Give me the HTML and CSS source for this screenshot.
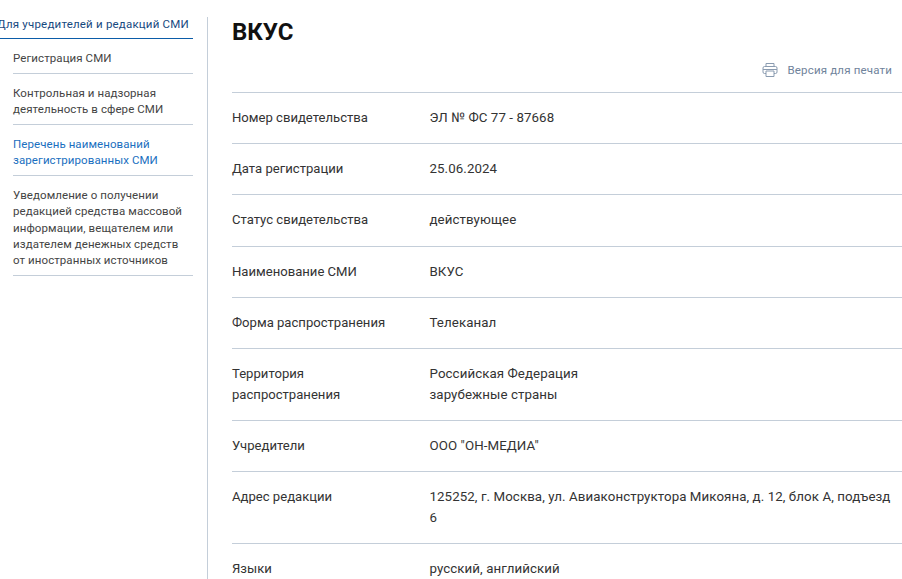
FILE: index.html
```html
<!DOCTYPE html>
<html lang="ru">
<head>
<meta charset="utf-8">
<title>ВКУС</title>
<link rel="stylesheet" href="styles.css">
</head>
<body>
<div class="page">
  <aside class="side">
    <a class="side-head">Для учредителей и редакций СМИ</a>
    <ul class="side-list">
      <li class="side-item">Регистрация СМИ</li>
      <li class="side-item">Контрольная и надзорная<br>деятельность в сфере СМИ</li>
      <li class="side-item side-active">Перечень наименований<br>зарегистрированных СМИ</li>
      <li class="side-item">Уведомление о получении<br>редакцией средства массовой<br>информации, вещателем или<br>издателем денежных средств<br>от иностранных источников</li>
    </ul>
  </aside>
  <main class="main">
    <h1 class="title">ВКУС</h1>
    <div class="print">
      <svg class="print-icon" width="16" height="16" viewBox="0 0 16 16" fill="none" stroke="#8a9bb0" stroke-width="1">
        <path d="M4 4.5V1.5H12V4.5"/>
        <path d="M4 11.5H2.5A1.5 1.5 0 0 1 1 10V6A1.5 1.5 0 0 1 2.5 4.5H13.5A1.5 1.5 0 0 1 15 6V10A1.5 1.5 0 0 1 13.5 11.5H12"/>
        <path d="M4 9H12V14.5H4Z"/>
        <path d="M1 7.5H15"/>
      </svg>
      <span>Версия для печати</span>
    </div>
    <dl class="table">
      <div class="row"><dt>Номер свидетельства</dt><dd>ЭЛ № ФС 77 - 87668</dd></div>
      <div class="row"><dt>Дата регистрации</dt><dd>25.06.2024</dd></div>
      <div class="row"><dt>Статус свидетельства</dt><dd>действующее</dd></div>
      <div class="row"><dt>Наименование СМИ</dt><dd>ВКУС</dd></div>
      <div class="row"><dt>Форма распространения</dt><dd>Телеканал</dd></div>
      <div class="row"><dt>Территория<br>распространения</dt><dd>Российская Федерация<br>зарубежные страны</dd></div>
      <div class="row"><dt>Учредители</dt><dd>ООО "ОН-МЕДИА"</dd></div>
      <div class="row"><dt>Адрес редакции</dt><dd>125252, г. Москва, ул. Авиаконструктора Микояна, д. 12, блок А, подъезд<br>6</dd></div>
      <div class="row"><dt>Языки</dt><dd>русский, английский</dd></div>
    </dl>
  </main>
</div>
</body>
</html>
```
FILE: styles.css
```css
html, body {
  margin: 0;
  padding: 0;
  height: 100%;
  overflow: hidden;
  background: #fff;
}
body {
  font-family: Roboto, "Liberation Sans", sans-serif;
  color: #333;
}
.page {
  display: flex;
  height: 579px;
  overflow: hidden;
}
.side {
  width: 193px;
  flex: none;
  margin-right: 14px;
  padding-top: 16px;
  font-size: 11.5px;
  line-height: 16.33px;
  letter-spacing: 0.08px;
}
.side-head {
  display: block;
  margin-left: -3px;
  padding-bottom: 6px;
  border-bottom: 1px solid #0b5ca8;
  color: #17497f;
  white-space: nowrap;
  letter-spacing: 0.2px;
}
.side-list {
  list-style: none;
  margin: 0;
  padding: 0 0 0 13px;
}
.side-item {
  padding: 11px 0 6.4px;
  border-bottom: 1px solid #c4ced9;
  color: #444;
}
.side-active {
  color: #1a6fc0;
}
.main {
  flex: 1;
  margin-top: 17px;
  padding-left: 24px;
  border-left: 1px solid #c4ced9;
  min-width: 0;
}
.title {
  margin: 0;
  font-size: 24px;
  line-height: 30px;
  font-weight: 700;
  color: #111;
}
.print {
  display: flex;
  align-items: center;
  justify-content: flex-end;
  gap: 9px;
  margin: 8px 0 6.7px;
  padding-right: 10px;
  height: 30px;
  font-size: 11.5px;
  color: #6f839b;
  letter-spacing: 0.17px;
}
.table {
  margin: 0;
  border-top: 1px solid #c4ced9;
  font-size: 13.3px;
  line-height: 20.33px;
}
.row {
  display: flex;
  padding: 15px 0;
  border-bottom: 1px solid #c4ced9;
}
.row dt {
  width: 197.5px;
  flex: none;
  font-size: 13.1px;
}
.row dd {
  margin: 0;
  flex: 1;
  letter-spacing: 0.08px;
}
```
